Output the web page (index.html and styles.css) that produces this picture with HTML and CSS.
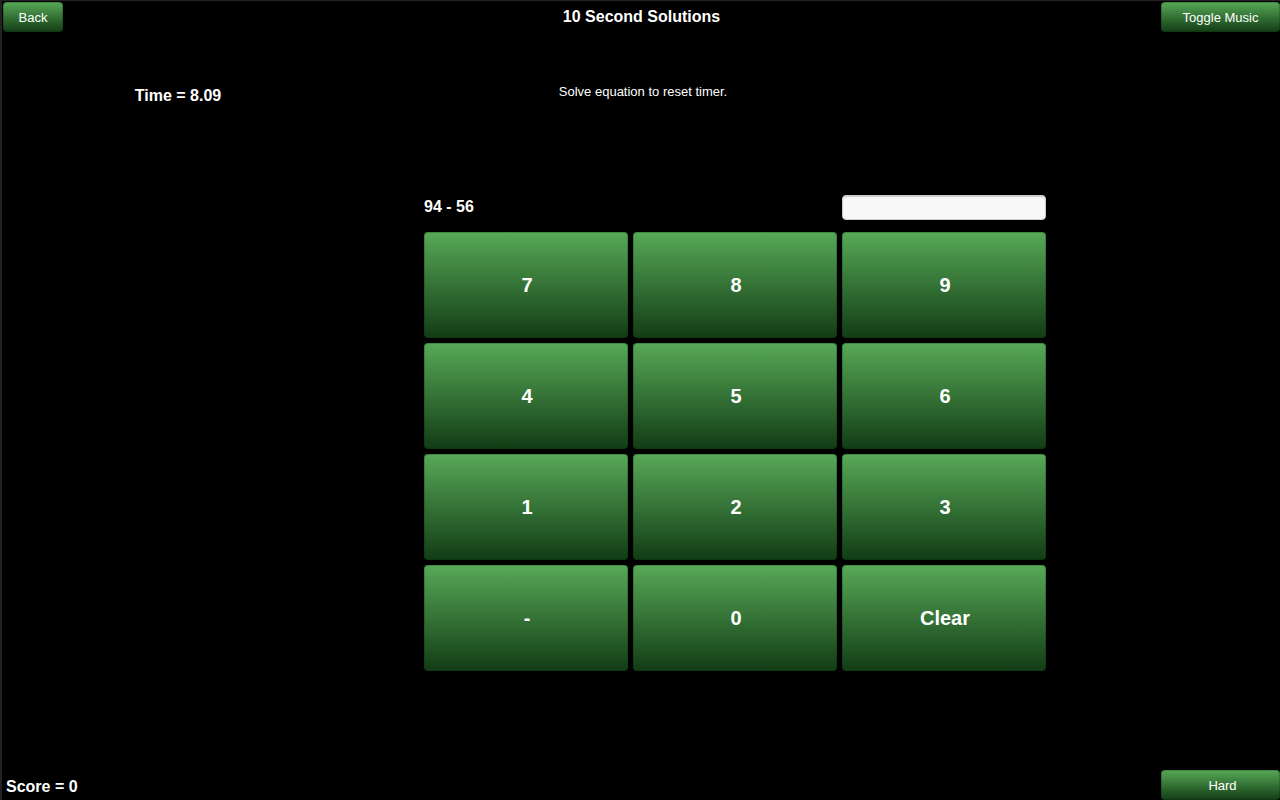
FILE: index.html
```html
<!DOCTYPE html>
<html lang="en">
<head>
<meta charset="utf-8">
<meta name="viewport" content="width=device-width, initial-scale=1">
<title>10 Second Solutions</title>
<link rel="stylesheet" href="styles.css">
</head>
<body>
<div class="page">
  <header class="bar">
    <button class="btn btn-back" type="button">Back</button>
    <h1 class="title">10 Second Solutions</h1>
    <button class="btn btn-side" type="button">Toggle Music</button>
  </header>
  <section class="status">
    <strong class="time">Time = 8.09</strong>
    <p class="hint">Solve equation to reset timer.</p>
  </section>
  <main class="game">
    <div class="board">
      <label class="equation" for="answer">94 - 56</label>
      <input class="answer" id="answer" type="text" autocomplete="off">
      <button class="btn key" type="button">7</button>
      <button class="btn key" type="button">8</button>
      <button class="btn key" type="button">9</button>
      <button class="btn key" type="button">4</button>
      <button class="btn key" type="button">5</button>
      <button class="btn key" type="button">6</button>
      <button class="btn key" type="button">1</button>
      <button class="btn key" type="button">2</button>
      <button class="btn key" type="button">3</button>
      <button class="btn key" type="button">-</button>
      <button class="btn key" type="button">0</button>
      <button class="btn key" type="button">Clear</button>
    </div>
  </main>
  <footer class="bar bar-bottom">
    <strong class="score">Score = 0</strong>
    <button class="btn btn-side btn-level" type="button">Hard</button>
  </footer>
</div>
</body>
</html>
```

FILE: styles.css
```css
* {
  box-sizing: border-box;
}

body {
  margin: 0;
  background: #000;
  color: #fff;
  font-family: "Liberation Sans", Arial, sans-serif;
  font-size: 13px;
  line-height: 16px;
}

.page {
  display: flex;
  flex-direction: column;
  min-height: 100vh;
  border-top: 1px solid #222;
  border-left: 2px solid #222;
}

.bar {
  display: grid;
  grid-template-columns: 1fr auto 1fr;
  align-items: center;
  padding: 1px 0 0 1px;
}

.bar-bottom {
  grid-template-columns: 1fr auto;
  margin-top: auto;
  padding-left: 4px;
}

.btn {
  height: 30px;
  padding: 2px 0 0;
  border: 1px solid rgba(0, 40, 0, 0.25);
  border-radius: 4px;
  background: linear-gradient(#57a957, #123c15) border-box;
  color: #fff;
  font: inherit;
}

.btn-back {
  justify-self: start;
  width: 60px;
}

.btn-side {
  justify-self: end;
  width: 119px;
}

.btn-level {
  padding-left: 4px;
}

.title,
.time,
.score,
.equation {
  margin: 0;
  font-size: 16px;
  font-weight: bold;
  line-height: 20px;
}

.score {
  padding-top: 4px;
}

.status {
  display: grid;
  grid-template-columns: 3fr 5fr 3fr;
  padding: 52px 0 0 2px;
  text-align: center;
}

.time {
  padding-top: 2px;
}

.hint {
  margin: 0;
  padding-left: 2px;
}

.game {
  display: grid;
  grid-template-columns: 422fr 622fr 234fr;
  padding: 89px 0 80px;
}

.board {
  display: grid;
  grid-template-columns: repeat(3, 1fr);
  gap: 5px;
  grid-column: 2;
}

.equation {
  grid-column: span 2;
  padding-top: 2px;
}

.answer {
  width: 100%;
  height: 25px;
  margin-bottom: 7px;
  padding: 0 6px;
  border: 1px solid #ccc;
  border-radius: 4px;
  background: #f8f8f8;
  box-shadow: inset 0 1px 1px #ccc;
  color: #222;
  font: inherit;
}

.key {
  height: 106px;
  padding: 0 0 0 2px;
  font-size: 20px;
  font-weight: bold;
}
```
